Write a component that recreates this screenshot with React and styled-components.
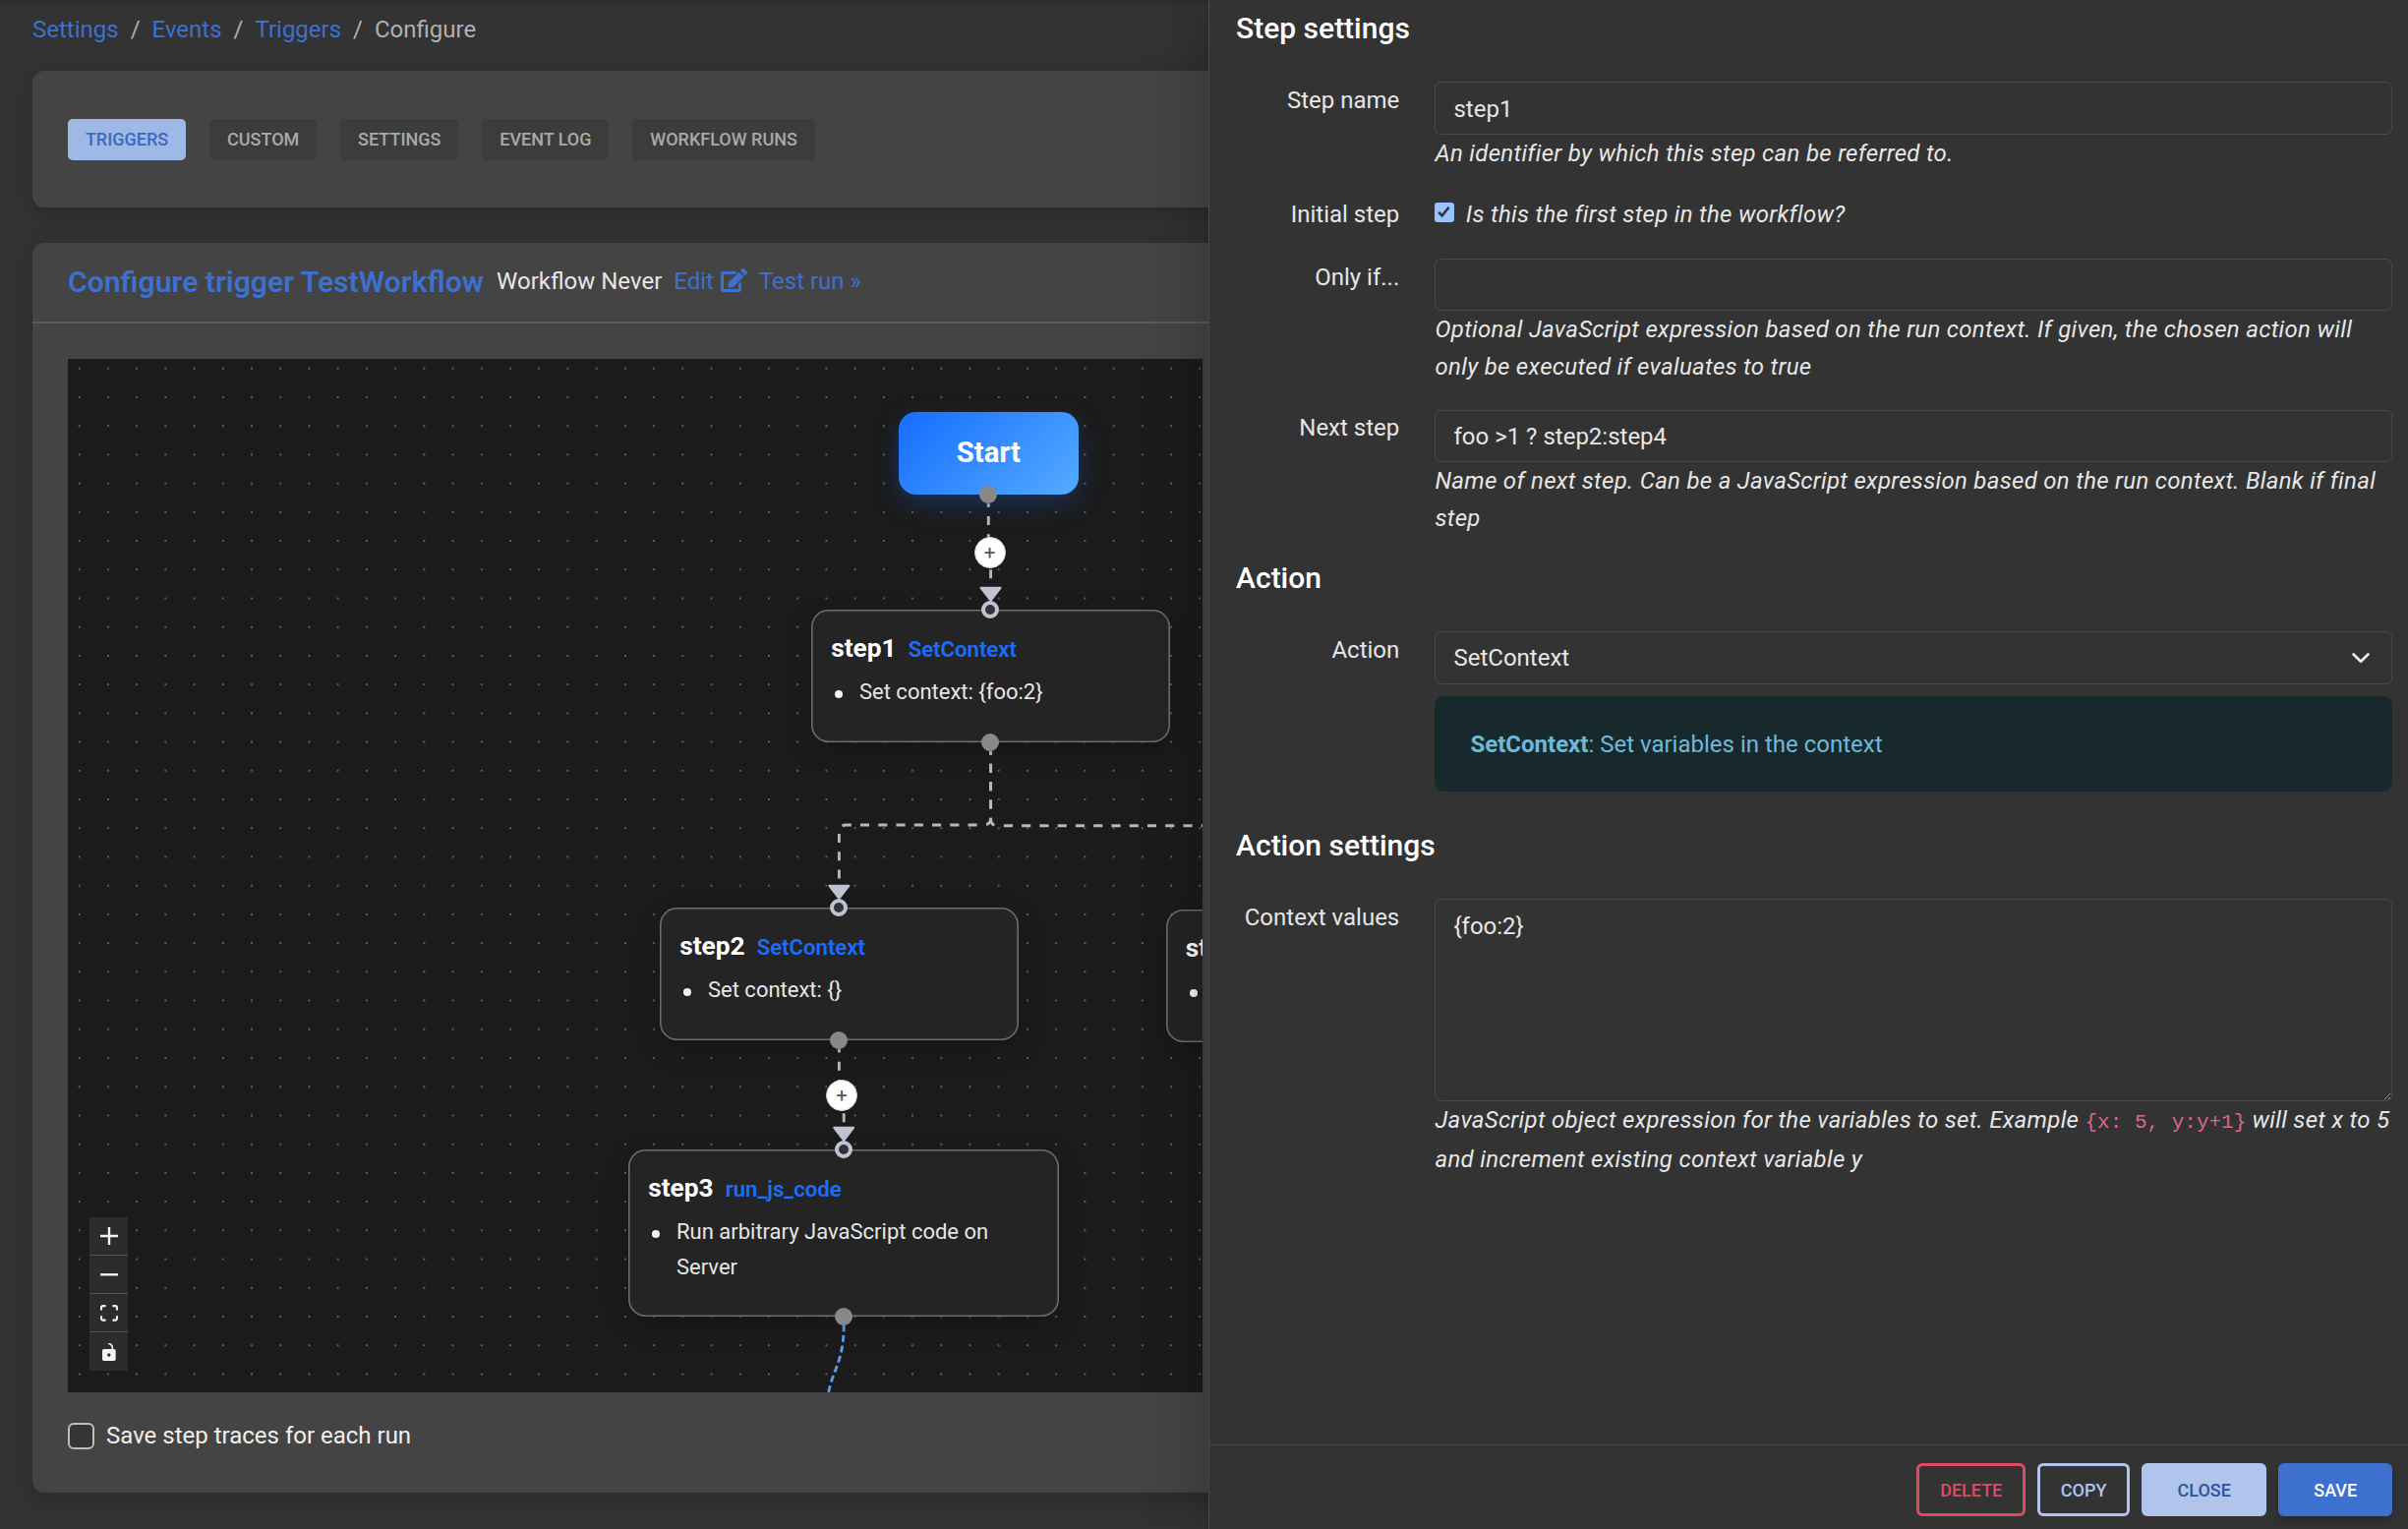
import React, { useState } from "react";
import styled, { createGlobalStyle } from "styled-components";
import { FaEdit } from "react-icons/fa";

const tabs = ["Triggers", "Custom", "Settings", "Event log", "Workflow runs"];

const crumbs = ["Settings", "Events", "Triggers"];

// Positions are relative to the top left corner of the canvas
const steps = [
  { name: "step1", action: "SetContext", text: "Set context: {foo:2}", x: 756, y: 254.7, w: 364.8 },
  { name: "step2", action: "SetContext", text: "Set context: {}", x: 602, y: 557.7, w: 364.8 },
  { name: "step4", action: "", text: "", x: 1116.6, y: 559.5, w: 364.8 },
  {
    name: "step3",
    action: "run_js_code",
    text: "Run arbitrary JavaScript code on Server",
    x: 570,
    y: 804,
    w: 438,
  },
];

const edges = [
  "M936.3 147.3 V194 L938.6 198 V246",
  "M938.6 399.2 V466.7 Q938.6 474 931.3 474 H791.7 Q784.4 474 784.4 481.3 V549",
  "M938.6 399.2 V467.4 Q938.6 474.7 945.9 474.7 H1290",
  "M784.4 702 V746 L789.2 750 V795",
];

const arrows = [
  { x: 938.6, y: 232.8 },
  { x: 784.4, y: 535.8 },
  { x: 789.2, y: 781.8 },
];

const addButtons = [
  { x: 937.7, y: 196.3 },
  { x: 787.2, y: 748.3 },
];

const controls = [
  {
    title: "zoom in",
    width: 18,
    height: 18,
    viewBox: "0 0 32 32",
    d: "M32 18.133H18.133V32h-4.266V18.133H0v-4.266h13.867V0h4.266v13.867H32z",
  },
  { title: "zoom out", width: 18, height: 3, viewBox: "0 0 32 5", d: "M0 0h32v4.2H0z" },
  {
    title: "fit view",
    width: 18,
    height: 17,
    viewBox: "0 0 32 30",
    d: "M3.692 4.63c0-.53.4-.938.939-.938h5.215V0H4.708C2.13 0 0 2.054 0 4.63v5.216h3.692V4.631zM27.354 0h-5.2v3.692h5.17c.53 0 .984.4.984.939v5.215H32V4.631A4.624 4.624 0 0027.354 0zm.954 24.83c0 .532-.4.94-.939.94h-5.215v3.768h5.215c2.577 0 4.631-2.13 4.631-4.707v-5.139h-3.692v5.139zm-23.677.94c-.531 0-.939-.4-.939-.94v-5.138H0v5.139c0 2.577 2.13 4.707 4.708 4.707h5.138V25.77H4.631z",
  },
  {
    title: "toggle interactivity",
    width: 14,
    height: 18,
    viewBox: "0 0 25 32",
    d: "M21.333 10.667H19.81V7.619C19.81 3.429 16.38 0 12.19 0c-4.114 1.828-1.37 2.133.305 2.438 1.676.305 4.42 2.59 4.42 5.181v3.048H3.047A3.056 3.056 0 000 13.714v15.238A3.056 3.056 0 003.048 32h18.285a3.056 3.056 0 003.048-3.048V13.714a3.056 3.056 0 00-3.048-3.047zM12.19 24.533a3.056 3.056 0 01-3.047-3.047 3.056 3.056 0 013.047-3.048 3.056 3.056 0 013.048 3.048 3.056 3.056 0 01-3.048 3.047z",
  },
];

function FlowCanvas() {
  return (
    <Canvas>
      <EdgeLayer width="1154" height="1051">
        <defs>
          <pattern
            id="dots"
            x="-2.9"
            y="-4.9"
            width="29.22"
            height="29.22"
            patternUnits="userSpaceOnUse"
          >
            <circle cx="14.61" cy="14.61" r="0.95" fill="#777" />
          </pattern>
        </defs>
        <rect width="1154" height="1051" fill="url(#dots)" />
        {edges.map((d) => (
          <Edge key={d} d={d} />
        ))}
        <LoopEdge d="M789.2 982 C789.2 1022 777 1028 773 1055" />
        {arrows.map(({ x, y }) => (
          <Arrow key={y} d={`M${x - 10} ${y} H${x + 10} L${x} ${y + 13} Z`} />
        ))}
      </EdgeLayer>

      <StartNode>
        Start
        <SourceHandle />
      </StartNode>
      {steps.map((step) => (
        <StepNode key={step.name} $x={step.x} $y={step.y} $w={step.w}>
          <TargetHandle />
          <StepHead>
            <StepName>{step.name}</StepName>
            {step.action && <StepAction>{step.action}</StepAction>}
          </StepHead>
          <StepList>
            <li>{step.text}</li>
          </StepList>
          <SourceHandle />
        </StepNode>
      ))}
      {addButtons.map(({ x, y }) => (
        <AddButton key={y} $x={x} $y={y}>
          +
        </AddButton>
      ))}

      <Controls>
        {controls.map((c) => (
          <ControlButton key={c.title} title={c.title}>
            <svg width={c.width} height={c.height} viewBox={c.viewBox}>
              <path d={c.d} />
            </svg>
          </ControlButton>
        ))}
      </Controls>
    </Canvas>
  );
}

function StepDrawer() {
  const [stepName, setStepName] = useState("step1");
  const [initial, setInitial] = useState(true);
  const [onlyIf, setOnlyIf] = useState("");
  const [nextStep, setNextStep] = useState("foo >1 ? step2:step4");
  const [context, setContext] = useState("{foo:2}");

  return (
    <Drawer>
      <DrawerBody>
        <Heading>Step settings</Heading>
        <Row>
          <Label htmlFor="step-name">Step name</Label>
          <div>
            <Input
              id="step-name"
              value={stepName}
              onChange={(event) => setStepName(event.target.value)}
            />
            <Help>An identifier by which this step can be referred to.</Help>
          </div>
        </Row>
        <Row>
          <Label>Initial step</Label>
          <CheckLine>
            <CheckedBox onClick={() => setInitial(!initial)}>
              {initial && (
                <svg width="19" height="19" viewBox="0 0 19 19">
                  <path
                    d="M4.2 9.8 L7.7 13.4 L14.6 4.8"
                    fill="none"
                    stroke="#333"
                    strokeWidth="2.6"
                  />
                </svg>
              )}
            </CheckedBox>
            <Help>Is this the first step in the workflow?</Help>
          </CheckLine>
        </Row>
        <Row>
          <Label htmlFor="only-if">Only if...</Label>
          <div>
            <Input
              id="only-if"
              value={onlyIf}
              onChange={(event) => setOnlyIf(event.target.value)}
            />
            <Help>
              Optional JavaScript expression based on the run context. If given,
              the chosen action will
              <br />
              only be executed if evaluates to true
            </Help>
          </div>
        </Row>
        <Row>
          <Label htmlFor="next-step">Next step</Label>
          <div>
            <Input
              id="next-step"
              value={nextStep}
              onChange={(event) => setNextStep(event.target.value)}
            />
            <Help>
              Name of next step. Can be a JavaScript expression based on the run
              context. Blank if final
              <br />
              step
            </Help>
          </div>
        </Row>

        <Heading>Action</Heading>
        <Row>
          <Label>Action</Label>
          <div>
            <Select>
              SetContext
              <svg width="18" height="11" viewBox="0 0 18 11">
                <path
                  d="M1.6 1.5 L9 8.8 L16.4 1.5"
                  fill="none"
                  stroke="#ececec"
                  strokeWidth="2.6"
                  strokeLinecap="round"
                  strokeLinejoin="round"
                />
              </svg>
            </Select>
            <Alert>
              <b>SetContext</b>: Set variables in the context
            </Alert>
          </div>
        </Row>

        <Heading>Action settings</Heading>
        <Row>
          <Label htmlFor="context-values">Context values</Label>
          <div>
            <TextArea
              id="context-values"
              value={context}
              onChange={(event) => setContext(event.target.value)}
            />
            <Help>
              JavaScript object expression for the variables to set. Example{" "}
              <Code>{"{x: 5, y:y+1}"}</Code> will set x to 5
              <br />
              and increment existing context variable y
            </Help>
          </div>
        </Row>
      </DrawerBody>
      <DrawerFooter>
        <OutlineButton $color="#dc4c64">Delete</OutlineButton>
        <OutlineButton $color="#b1c5ec">Copy</OutlineButton>
        <CloseButton>Close</CloseButton>
        <SaveButton>Save</SaveButton>
      </DrawerFooter>
    </Drawer>
  );
}

export default function App() {
  return (
    <>
      <GlobalStyle />
      <Page>
        <Main>
          <Breadcrumb>
            {crumbs.map((crumb) => (
              <React.Fragment key={crumb}>
                <Link>{crumb}</Link>
                <span>/</span>
              </React.Fragment>
            ))}
            <span>Configure</span>
          </Breadcrumb>

          <TabCard>
            {tabs.map((tab) => (
              <Tab key={tab} $active={tab === "Triggers"}>
                {tab}
              </Tab>
            ))}
          </TabCard>

          <Card>
            <CardHeader>
              <Title>Configure trigger TestWorkflow</Title>
              <span>Workflow Never</span>
              <Link>
                Edit <FaEdit />
              </Link>
              <Link>Test run »</Link>
            </CardHeader>
            <CardBody>
              <FlowCanvas />
              <TraceLabel>
                <EmptyBox />
                Save step traces for each run
              </TraceLabel>
            </CardBody>
          </Card>
        </Main>
        <StepDrawer />
      </Page>
    </>
  );
}

const GlobalStyle = createGlobalStyle`
  * {
    box-sizing: border-box;
  }

  body {
    margin: 0;
    background: #333;
    color: #e6e6e6;
    font-family: Roboto, "Liberation Sans", sans-serif;
    font-size: 24px;
    line-height: 37.7px;
  }

  button,
  input,
  textarea {
    font-family: inherit;
  }
`;

const Page = styled.div`
  display: flex;
  height: 1555px;
  overflow: hidden;
`;

const Main = styled.main`
  flex: 0 0 1228.7px;
  padding: 12px 0 0 33px;
  overflow: hidden;
  box-shadow: inset 0 6px 6px -6px rgba(0, 0, 0, 0.35);
`;

const Breadcrumb = styled.nav`
  display: flex;
  gap: 12px;
  margin-bottom: 22.4px;
  color: #b0b0b0;
`;

const Link = styled.a`
  color: #3d70cf;
  cursor: pointer;

  svg {
    width: 27px;
    height: 24px;
    margin-left: 1px;
    vertical-align: -3px;
  }
`;

// Cards run on below the drawer
const Card = styled.section`
  width: 1226px;
  background: #444;
  border-radius: 12px;
  box-shadow: 0 6px 26px rgba(0, 0, 0, 0.22);
`;

const TabCard = styled(Card)`
  display: flex;
  align-items: flex-start;
  gap: 24px;
  height: 138.6px;
  margin-bottom: 36px;
  padding: 48.5px 36px;
`;

const Tab = styled.button`
  height: 42px;
  padding: 0 17.9px;
  border: none;
  border-radius: 5px;
  background: ${({ $active }) => ($active ? "#9fb9e7" : "#3c3c3c")};
  color: ${({ $active }) => ($active ? "#3b69bd" : "#a9a9a9")};
  font-size: 18px;
  font-weight: 500;
  line-height: 42px;
  text-transform: uppercase;
`;

const CardHeader = styled.header`
  display: flex;
  align-items: center;
  height: 82.6px;
  padding: 0 36px;
  border-bottom: 2.6px solid #5b5b5b;

  span {
    margin: 0 12px 0 13px;
  }

  a + a {
    margin-left: 12px;
  }
`;

const Title = styled.h1`
  margin: 0;
  color: #3d70cf;
  font-size: 30.15px;
  font-weight: 600;
  line-height: 40px;
`;

const CardBody = styled.div`
  padding: 36px 36px 38.7px;
`;

const Canvas = styled.div`
  position: relative;
  width: 1154px;
  height: 1051px;
  overflow: hidden;
  background: #1b1b1b;
`;

const EdgeLayer = styled.svg`
  display: block;
`;

const Edge = styled.path`
  fill: none;
  stroke: #b4b8c4;
  stroke-width: 2.9;
  stroke-dasharray: 9.13;
  stroke-dashoffset: 5.6;
`;

const LoopEdge = styled(Edge)`
  stroke: #5f97ea;
  stroke-dasharray: 7 3.7;
  stroke-dashoffset: 0;
`;

const Arrow = styled.path`
  fill: #c0c4d0;
  stroke: #c0c4d0;
  stroke-width: 2;
  stroke-linejoin: round;
`;

const Handle = styled.i`
  position: absolute;
  left: 50%;
  width: 18px;
  height: 18px;
  border-radius: 50%;
`;

const SourceHandle = styled(Handle)`
  bottom: 0;
  background: #888;
  transform: translate(-50%, 50%);
`;

const TargetHandle = styled(Handle)`
  top: 0;
  border: 4px solid #c0c4d0;
  background: #33333f;
  transform: translate(-50%, -50%);
`;

const StartNode = styled.div`
  position: absolute;
  left: 844.7px;
  top: 54px;
  display: flex;
  align-items: center;
  justify-content: center;
  width: 183.3px;
  height: 84px;
  border-radius: 17.5px;
  background: linear-gradient(135deg, #156dff 0%, #55abff 100%);
  box-shadow: 0 9px 26px rgba(22, 110, 255, 0.25);
  color: #fff;
  font-size: 29.3px;
  font-weight: 700;
`;

const StepNode = styled.div`
  position: absolute;
  left: ${({ $x }) => $x}px;
  top: ${({ $y }) => $y}px;
  width: ${({ $w }) => $w}px;
  min-height: 135px;
  padding: 22.9px 20.2px 32.4px;
  border-radius: 17.5px;
  background: #242424;
  box-shadow: inset 0 0 0 1.6px #6c6c6c, 0 9px 26px rgba(0, 0, 0, 0.18);
`;

const StepHead = styled.div`
  display: flex;
  align-items: baseline;
  gap: 12px;
  margin-bottom: 10.3px;
  line-height: 32px;
`;

const StepName = styled.strong`
  color: #fff;
  font-size: 26.3px;
  font-weight: 700;
`;

const StepAction = styled.span`
  color: #1a6dff;
  font-size: 22.15px;
  font-weight: 600;
`;

const StepList = styled.ul`
  margin: 0;
  padding: 0;
  list-style: none;
  font-size: 22px;
  line-height: 35.4px;

  li {
    display: flex;
    gap: 17px;
  }

  li::before {
    content: "";
    flex: none;
    width: 8px;
    height: 8px;
    margin: 16px 0 0 3.8px;
    border-radius: 50%;
    background: #f4f4f4;
  }
`;

const AddButton = styled.button`
  position: absolute;
  left: ${({ $x }) => $x - 16}px;
  top: ${({ $y }) => $y - 16}px;
  width: 32px;
  height: 32px;
  padding: 0;
  border: 1.5px solid #c9ced8;
  border-radius: 50%;
  background: #fff;
  color: #555;
  font-size: 20.5px;
  line-height: 28px;
`;

const Controls = styled.div`
  position: absolute;
  left: 22.3px;
  bottom: 22px;
  display: flex;
  flex-direction: column;
  width: 39px;
`;

const ControlButton = styled.button`
  display: flex;
  align-items: center;
  justify-content: center;
  height: 39px;
  padding: 0;
  border: none;
  background: #2c2c2c;

  &:not(:last-child) {
    border-bottom: 1.5px solid #565656;
  }

  svg {
    fill: #f4f4f4;
  }
`;

const TraceLabel = styled.label`
  display: flex;
  align-items: center;
  gap: 12px;
  margin-top: 25.5px;
  color: #f0f0f0;
`;

const EmptyBox = styled.i`
  width: 27px;
  height: 27px;
  border: 2.6px solid #bdbdbd;
  border-radius: 6px;
  background: #353535;
`;

const Drawer = styled.aside`
  position: relative;
  display: flex;
  flex: 1;
  flex-direction: column;
  border-left: 1.5px solid #484a4d;
  background: #333;
  box-shadow: 0 0 60px rgba(0, 0, 0, 0.28);
`;

const DrawerBody = styled.div`
  flex: 1;
  padding: 11.4px 15.7px 0 27.4px;
`;

const Heading = styled.h2`
  margin: 0 0 36px;
  color: #fff;
  font-size: 30px;
  font-weight: 500;
  line-height: 36px;
`;

const Row = styled.div`
  display: grid;
  grid-template-columns: 166.2px 1fr;
  column-gap: 36.2px;
  margin-bottom: 24.8px;
`;

const Label = styled.label`
  padding-top: 0.8px;
  text-align: right;
`;

const Input = styled.input`
  display: block;
  width: 100%;
  height: 53.6px;
  padding: 1.4px 18px 0;
  border: 1.5px solid #4a4a4a;
  border-radius: 6px;
  background: transparent;
  color: #e6e6e6;
  font-size: 24px;
  outline: none;
`;

const TextArea = styled.textarea`
  display: block;
  width: 100%;
  height: 206.2px;
  padding: 8.5px 18px 7px;
  border: 1.5px solid #4a4a4a;
  border-radius: 6px;
  background: transparent;
  color: #e6e6e6;
  font-size: 24px;
  line-height: 37.7px;
  outline: none;
`;

const Help = styled.p`
  margin: 0 0 -0.8px;
  padding-top: 0.8px;
  font-style: italic;
  letter-spacing: 0.3px;
  white-space: nowrap;
`;

const Code = styled.code`
  color: #d8688f;
  font-family: "Liberation Mono", monospace;
  font-size: 21px;
  font-style: normal;
  letter-spacing: 0;
`;

const CheckLine = styled.div`
  display: flex;
  gap: 12px;
  height: 38px;
`;

const CheckedBox = styled.span`
  display: flex;
  width: 19.4px;
  height: 19.4px;
  margin-top: 6.7px;
  border-radius: 3px;
  background: #99c3ff;
`;

const Select = styled.div`
  display: flex;
  align-items: center;
  justify-content: space-between;
  height: 53.6px;
  padding: 1.2px 22px 0 18px;
  border: 1.5px solid #4a4a4a;
  border-radius: 6px;
`;

const Alert = styled.div`
  margin: 12.4px 0 11.8px;
  padding: 30.9px 36px 28.5px;
  border-radius: 9px;
  background: #18292d;
  color: #6fb9d8;
`;

const DrawerFooter = styled.footer`
  display: flex;
  justify-content: flex-end;
  gap: 12px;
  height: 85.6px;
  padding: 17.6px 15.7px 0;
  border-top: 1.5px solid #484a4d;
`;

const Button = styled.button`
  height: 54.4px;
  padding: 1.5px 36.2px 0;
  border: none;
  border-radius: 6px;
  font-size: 18px;
  font-weight: 500;
  text-transform: uppercase;
`;

const OutlineButton = styled(Button)`
  padding: 1.5px 20.8px 0;
  border: 3px solid ${({ $color }) => $color};
  background: transparent;
  color: ${({ $color }) => $color};
`;

const CloseButton = styled(Button)`
  background: #b1c5ec;
  color: #2c5599;
`;

const SaveButton = styled(Button)`
  background: #3d70cf;
  box-shadow: 0 6px 14px -4px rgba(0, 0, 0, 0.4);
  color: #fff;
`;
